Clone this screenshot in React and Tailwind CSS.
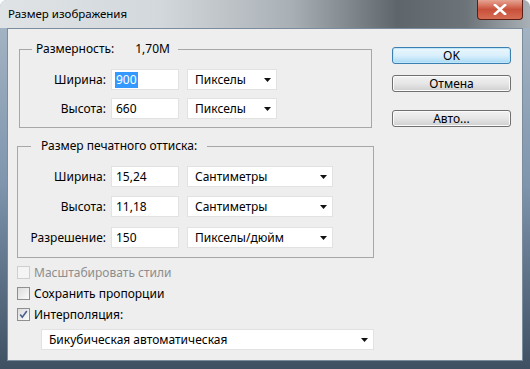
import React from "react";

const font = { fontFamily: '"Noto Sans", "Open Sans", sans-serif' };

function Arrow() {
  return (
    <svg width="7" height="4" viewBox="0 0 7 4" className="block">
      <path d="M0 0 H7 L3.5 4 Z" fill="#111" />
    </svg>
  );
}

function Input({ value, selected }) {
  return (
    <div className="w-[68px] h-[21px] bg-white border border-[#e2e2e2] flex items-center pl-[3px] text-[12px] text-black leading-none">
      {selected ? (
        <span className="bg-[#3399ff] text-white px-[1px] py-[2px]">{value}</span>
      ) : (
        <span className="pl-[1px]">{value}</span>
      )}
    </div>
  );
}

function Select({ value, w }) {
  return (
    <div className={`${w} h-[21px] bg-white border border-[#e2e2e2] flex items-center justify-between pl-[7px] pr-[5px] text-[12px] text-black`}>
      <span>{value}</span>
      <Arrow />
    </div>
  );
}

function Row({ label, value, selected, unit, sw, lw, className = "" }) {
  return (
    <div className={`flex items-center ${className}`}>
      <div className={`${lw} text-right text-[12px] text-black pr-[5px]`}>{label}</div>
      <Input value={value} selected={selected} />
      <div className="w-[8px]" />
      <Select value={unit} w={sw} />
    </div>
  );
}

function Checkbox({ checked, disabled }) {
  return (
    <div
      className={`w-[13px] h-[13px] border flex items-center justify-center ${
        disabled
          ? "border-[#cfcfcf] bg-[#f4f4f4]"
          : "border-[#8e8f8f] bg-gradient-to-br from-[#dcdcdc] to-[#fbfbfb]"
      }`}
    >
      {checked && (
        <svg width="11" height="11" viewBox="0 0 11 11">
          <path d="M2.2 5.6 L4.3 8.2 L8.8 2" fill="none" stroke="#4b5e8f" strokeWidth="1.6" />
        </svg>
      )}
    </div>
  );
}

function Button({ children, primary }) {
  return (
    <div
      className={`w-[119px] h-[17px] rounded-[3px] border flex items-center justify-center text-[12px] text-black ${
        primary
          ? "border-[#3c7fb1] bg-gradient-to-b from-[#eaf6fd] via-[#d9f0fc] to-[#a7d9f5] shadow-[inset_0_0_0_1px_#c0e6f9]"
          : "border-[#707070] bg-gradient-to-b from-[#f2f2f2] via-[#e6e6e6] to-[#cfcfcf] shadow-[inset_0_0_0_1px_#fbfbfb]"
      }`}
    >
      {children}
    </div>
  );
}

export default function App() {
  return (
    <div
      className="w-[530px] h-[369px] flex flex-col rounded-t-[7px] overflow-hidden bg-gradient-to-b from-[#a9b8c6] via-[#7e95ad] to-[#3f5063]"
      style={font}
    >
      {/* title bar */}
      <div className="h-[28px] flex items-start shrink-0 bg-[linear-gradient(90deg,#dfe3e6_0%,#d3d8dc_30%,#a9b0b5_55%,#5e666c_75%,#6c747a_88%,#aab1b6_100%)]">
        <div className="pl-[8px] pt-[6px] text-[11.5px] text-black leading-[16px] flex-1">
          Размер изображения
        </div>
        <div className="mr-[7px] w-[46px] h-[20px] rounded-b-[4px] border border-t-0 border-[#5b1d14] bg-gradient-to-b from-[#e6a493] via-[#c9503a] to-[#d56d55] flex items-center justify-center">
          <svg width="14" height="11" viewBox="0 0 14 11">
            <path d="M2 1 L12 10 M12 1 L2 10" stroke="#fff" strokeWidth="2.6" strokeLinecap="square" />
          </svg>
        </div>
      </div>

      {/* client area */}
      <div className="flex-1 mx-[7px] mb-[8px] border border-[#7b8c9c] bg-[#eeeeee] flex">
        <div className="w-[366px] flex flex-col pt-[12px]">
          <fieldset className="ml-[11px] w-[353px] border border-[#a7a7a7] px-0 pt-[12px] pb-[8px]">
            <legend className="ml-[12px] pl-[4px] pr-[8px] text-[12px] leading-[16px] text-black flex">
              <span>Размерность:</span>
              <span className="ml-[21px]">1,70M</span>
            </legend>
            <Row label="Ширина:" value="900" selected unit="Пикселы" sw="w-[90px]" lw="w-[91px]" />
            <Row label="Высота:" value="660" unit="Пикселы" sw="w-[90px]" lw="w-[91px]" className="mt-[8px]" />
          </fieldset>

          <fieldset className="ml-[9px] mt-[10px] w-[357px] border border-[#a7a7a7] px-0 pt-[12px] pb-[9px]">
            <legend className="ml-[13px] px-[10px] text-[12px] leading-[16px] text-black">
              Размер печатного оттиска:
            </legend>
            <Row label="Ширина:" value="15,24" unit="Сантиметры" sw="w-[146px]" lw="w-[93px]" />
            <Row label="Высота:" value="11,18" unit="Сантиметры" sw="w-[146px]" lw="w-[93px]" className="mt-[9px]" />
            <Row label="Разрешение:" value="150" unit="Пикселы/дюйм" sw="w-[146px]" lw="w-[93px]" className="mt-[10px]" />
          </fieldset>

          <div className="mt-[4px] ml-[9px] flex flex-col">
            <div className="h-[21px] flex items-center gap-[4px]">
              <Checkbox disabled />
              <span className="text-[12px] text-[#8d8d8d]">Масштабировать стили</span>
            </div>
            <div className="h-[21px] flex items-center gap-[4px]">
              <Checkbox />
              <span className="text-[12px] text-black">Сохранить пропорции</span>
            </div>
            <div className="h-[21px] flex items-center gap-[4px]">
              <Checkbox checked />
              <span className="text-[12px] text-black">Интерполяция:</span>
            </div>
          </div>
          <div className="mt-[4px] ml-[33px]">
            <Select value="Бикубическая автоматическая" w="w-[333px]" />
          </div>
        </div>

        <div className="ml-[18px] pt-[18px] flex flex-col">
          <Button primary>OK</Button>
          <div className="h-[11px]" />
          <Button>Отмена</Button>
          <div className="h-[18px]" />
          <Button>Авто...</Button>
        </div>
      </div>
    </div>
  );
}
